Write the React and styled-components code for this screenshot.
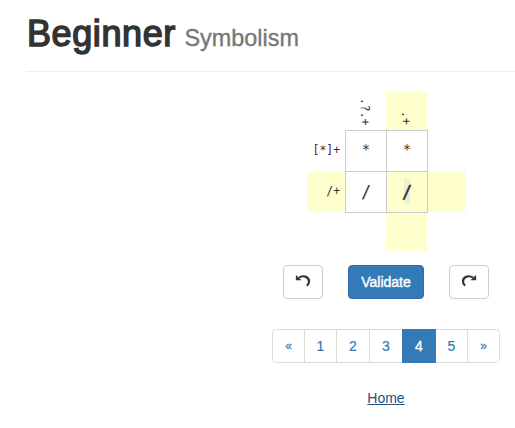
import React from "react";
import styled, { createGlobalStyle, css } from "styled-components";

const GlobalStyle = createGlobalStyle`
  * { box-sizing: border-box; }
  body {
    margin: 0;
    background: #fff;
    color: #333;
    font: 14px/20px "Liberation Sans", Arial, sans-serif;
    overflow: hidden;
  }
`;

const Page = styled.main`
  width: 515px;
  height: 428px;
  padding-left: 26px;
`;

const Header = styled.header`
  height: 72px;
  padding-top: 14px;
  border-bottom: 1px solid #eee;
`;

const Title = styled.h1`
  display: flex;
  align-items: baseline;
  margin: 0 0 0 1px;
  font-size: 36px;
  line-height: 40px;
  font-weight: 500;
  letter-spacing: 0.6px;
  -webkit-text-stroke: 1.5px #333;
`;

const Subtitle = styled.small`
  margin-left: 8.5px;
  color: #777;
  font-size: 23.4px;
  font-weight: 400;
  letter-spacing: 0.03px;
  -webkit-text-stroke: 0.35px #777;
`;

const Content = styled.section`
  width: 230px;
  margin: 20px 0 0 245px;
  display: flex;
  flex-direction: column;
  align-items: center;
`;

const Puzzle = styled.div`
  display: grid;
  grid-template-columns: 38px 41px 42px 38px;
  grid-template-rows: 38px 41px 42px 38px;
  margin-left: 1px;
  font-family: "DejaVu Sans Mono", monospace;
`;

const Clue = styled.div`
  display: flex;
  justify-content: flex-end;
  align-items: center;
  padding: 0 5px 2px 0;
  font-size: 11.4px;
  line-height: 14px;
  background: ${(p) => (p.$active ? "#ffffce" : "transparent")};
  ${(p) => p.$side && css`height: 41px;`}
  ${(p) =>
    p.$vertical &&
    css`
      width: 41px;
      padding: 0 1px 5px 0;
      writing-mode: vertical-rl;
    `}
`;

const Cell = styled.div`
  display: flex;
  align-items: center;
  justify-content: center;
  border: solid #ccc;
  border-width: 1px ${(p) => (p.$lastCol ? "1px" : 0)} ${(p) => (p.$lastRow ? "1px" : 0)} 1px;
  background: ${(p) => (p.$active ? "#ffffce" : "#fff")};
  font-size: ${(p) => (p.$slash ? "17px" : "14px")};
  padding-bottom: ${(p) => (p.$slash ? 0 : "4px")};
`;

const Selection = styled.span`
  display: flex;
  align-items: center;
  justify-content: center;
  width: 6px;
  height: 25px;
  margin-bottom: 1px;
  background: #eeeedc;
  -webkit-text-stroke: 0.5px #222;
`;

const Actions = styled.div`
  display: flex;
  justify-content: space-between;
  width: 206px;
  margin-top: 14px;
`;

const Button = styled.button`
  display: flex;
  align-items: center;
  justify-content: center;
  width: ${(p) => (p.$primary ? "76px" : "40px")};
  height: 34px;
  padding: 0;
  border: 1px solid ${(p) => (p.$primary ? "#2e6da4" : "#ccc")};
  border-radius: 4px;
  background: ${(p) => (p.$primary ? "#337ab7" : "#fff")};
  color: ${(p) => (p.$primary ? "#fff" : "#333")};
  font: 14px/20px "Liberation Sans", Arial, sans-serif;
  ${(p) => p.$primary && css`-webkit-text-stroke: 0.4px #fff;`}
`;

const Glyph = styled.svg`
  width: 16px;
  height: 16px;
  transform: ${(p) => (p.$flip ? "scaleX(-1)" : "none")};
`;

const Pagination = styled.nav`
  display: flex;
  align-self: flex-start;
  width: 228px;
  height: 34px;
  margin: 30px 0 0 1px;
  border: 1px solid #ddd;
  border-radius: 4px;
`;

const PageLink = styled.a`
  flex: none;
  width: ${(p) => p.$width}px;
  height: 34px;
  margin-top: -1px;
  padding: 7px 0;
  border-right: ${(p) => (p.$plain ? 0 : "1px solid #ddd")};
  color: #337ab7;
  font-size: ${(p) => (p.$arrow ? "12px" : "14px")};
  text-align: center;
  -webkit-text-stroke: 0.2px;
  ${(p) =>
    p.$active &&
    css`
      margin-left: -1px;
      border: 0;
      background: #337ab7;
      color: #fff;
      -webkit-text-stroke: 0.4px;
    `}
`;

const HomeLink = styled.a`
  margin-top: 25px;
  color: #23527c;
  text-decoration: underline;
`;

const pages = [
  { label: "«", width: 32, arrow: true },
  { label: "1", width: 32 },
  { label: "2", width: 33 },
  { label: "3", width: 33 },
  { label: "4", width: 34, active: true },
  { label: "5", width: 32 },
  { label: "»", width: 31, plain: true, arrow: true },
];

function TurnIcon({ flip }) {
  return (
    <Glyph viewBox="0 0 16 16" $flip={flip} aria-hidden="true">
      <path d="M4 3.7C8 .8 14 2.6 14 7.4c0 1.8-.8 3.2-2.2 4.3" fill="none" stroke="currentColor" strokeWidth="2.2" />
      <path d="M.9 1v5.3h5.6z" fill="currentColor" />
    </Glyph>
  );
}

export default function App() {
  return (
    <>
      <GlobalStyle />
      <Page>
        <Header>
          <Title>
            Beginner<Subtitle>Symbolism</Subtitle>
          </Title>
        </Header>
        <Content>
          <Puzzle>
            <Clue />
            <Clue $vertical>.?.+</Clue>
            <Clue $vertical $active>.+</Clue>
            <Clue />
            <Clue $side>[*]+</Clue>
            <Cell>*</Cell>
            <Cell $lastCol>*</Cell>
            <Clue />
            <Clue $side $active>/+</Clue>
            <Cell $lastRow $slash>/</Cell>
            <Cell $lastRow $lastCol $slash $active>
              <Selection>/</Selection>
            </Cell>
            <Clue $side $active />
            <Clue />
            <Clue />
            <Clue $vertical $active />
            <Clue />
          </Puzzle>
          <Actions>
            <Button aria-label="Undo"><TurnIcon /></Button>
            <Button $primary>Validate</Button>
            <Button aria-label="Redo"><TurnIcon flip /></Button>
          </Actions>
          <Pagination>
            {pages.map((p) => (
              <PageLink key={p.label} $width={p.width} $active={p.active} $plain={p.plain} $arrow={p.arrow}>
                {p.label}
              </PageLink>
            ))}
          </Pagination>
          <HomeLink>Home</HomeLink>
        </Content>
      </Page>
    </>
  );
}
